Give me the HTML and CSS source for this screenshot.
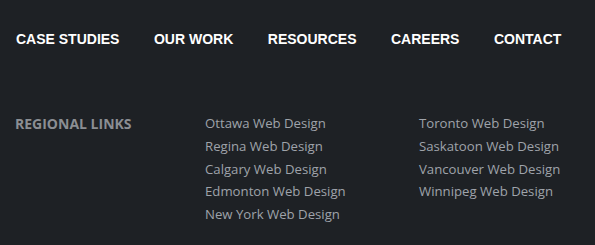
FILE: index.html
```html
<!DOCTYPE html>
<html lang="en">
<head>
    <meta charset="UTF-8">
    <meta name="viewport" content="width=device-width, initial-scale=1.0">
    <title>Footer</title>
    <link rel="stylesheet" href="styles.css">
</head>
<body>
    <nav class="main-nav">
        <a href="#">CASE STUDIES</a>
        <a href="#">OUR WORK</a>
        <a href="#">RESOURCES</a>
        <a href="#">CAREERS</a>
        <a href="#">CONTACT</a>
    </nav>
    <div class="regional">
        <h4>REGIONAL LINKS</h4>
        <ul>
            <li><a href="#">Ottawa Web Design</a></li>
            <li><a href="#">Regina Web Design</a></li>
            <li><a href="#">Calgary Web Design</a></li>
            <li><a href="#">Edmonton Web Design</a></li>
            <li><a href="#">New York Web Design</a></li>
        </ul>
        <ul>
            <li><a href="#">Toronto Web Design</a></li>
            <li><a href="#">Saskatoon Web Design</a></li>
            <li><a href="#">Vancouver Web Design</a></li>
            <li><a href="#">Winnipeg Web Design</a></li>
        </ul>
    </div>
</body>
</html>
```
FILE: styles.css
```css
body {
    margin: 0;
    background-color: #1e2125;
    height: 245px;
}
.main-nav {
    display: flex;
    gap: 34.5px;
    padding: 31px 16px 0;
    height: 50px;
    box-sizing: border-box;
}
.main-nav a {
    font-family: "Liberation Sans", Arial, sans-serif;
    font-weight: bold;
    font-size: 14px;
    line-height: 17px;
    color: #ffffff;
    text-decoration: none;
}
.regional {
    display: grid;
    grid-template-columns: 190px 214px 1fr;
    padding: 62px 0 0 15px;
    font-family: "Open Sans", sans-serif;
}
.regional h4 {
    margin: 0;
    font-size: 14px;
    line-height: 24px;
    color: #8b8e93;
}
.regional ul {
    list-style: none;
    margin: 0;
    padding: 0;
}
.regional li {
    font-size: 13.2px;
    line-height: 22.75px;
}
.regional a {
    color: #9fa3aa;
    text-decoration: none;
}
```
